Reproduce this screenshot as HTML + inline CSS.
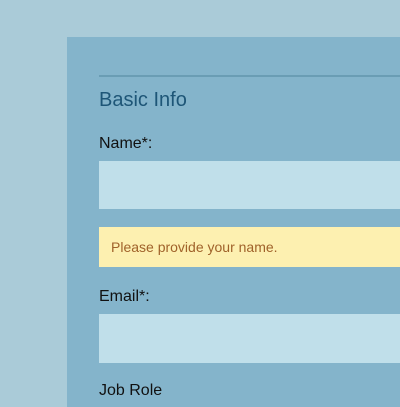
<!DOCTYPE html>
<html><head><style>
body{margin:0;width:400px;height:400px;overflow:hidden;background:#aacbd8;font-family:"Liberation Sans",sans-serif;}
.p{position:absolute;left:67px;top:37px;width:340px;height:370px;background:#84b4cb;}
.a{position:absolute;left:99px;}
</style></head><body>
<div class="p"></div>
<div class="a" style="top:75px;width:301px;height:2px;background:#6a9db4"></div>
<div class="a" style="top:89px;font-size:20px;color:#1e5677">Basic Info</div>
<div class="a" style="top:135px;font-size:16px;color:#111">Name*:</div>
<div class="a" style="top:161px;width:301px;height:48px;background:#c0dfea"></div>
<div class="a" style="top:227px;width:301px;height:40px;background:#fdf0b0"></div>
<div class="a" style="top:239px;left:111px;font-size:14px;color:#a0622a">Please provide your name.</div>
<div class="a" style="top:288px;font-size:16px;color:#111">Email*:</div>
<div class="a" style="top:314px;width:301px;height:49px;background:#c0dfea"></div>
<div class="a" style="top:382px;font-size:16px;color:#111">Job Role</div>
</body></html>
